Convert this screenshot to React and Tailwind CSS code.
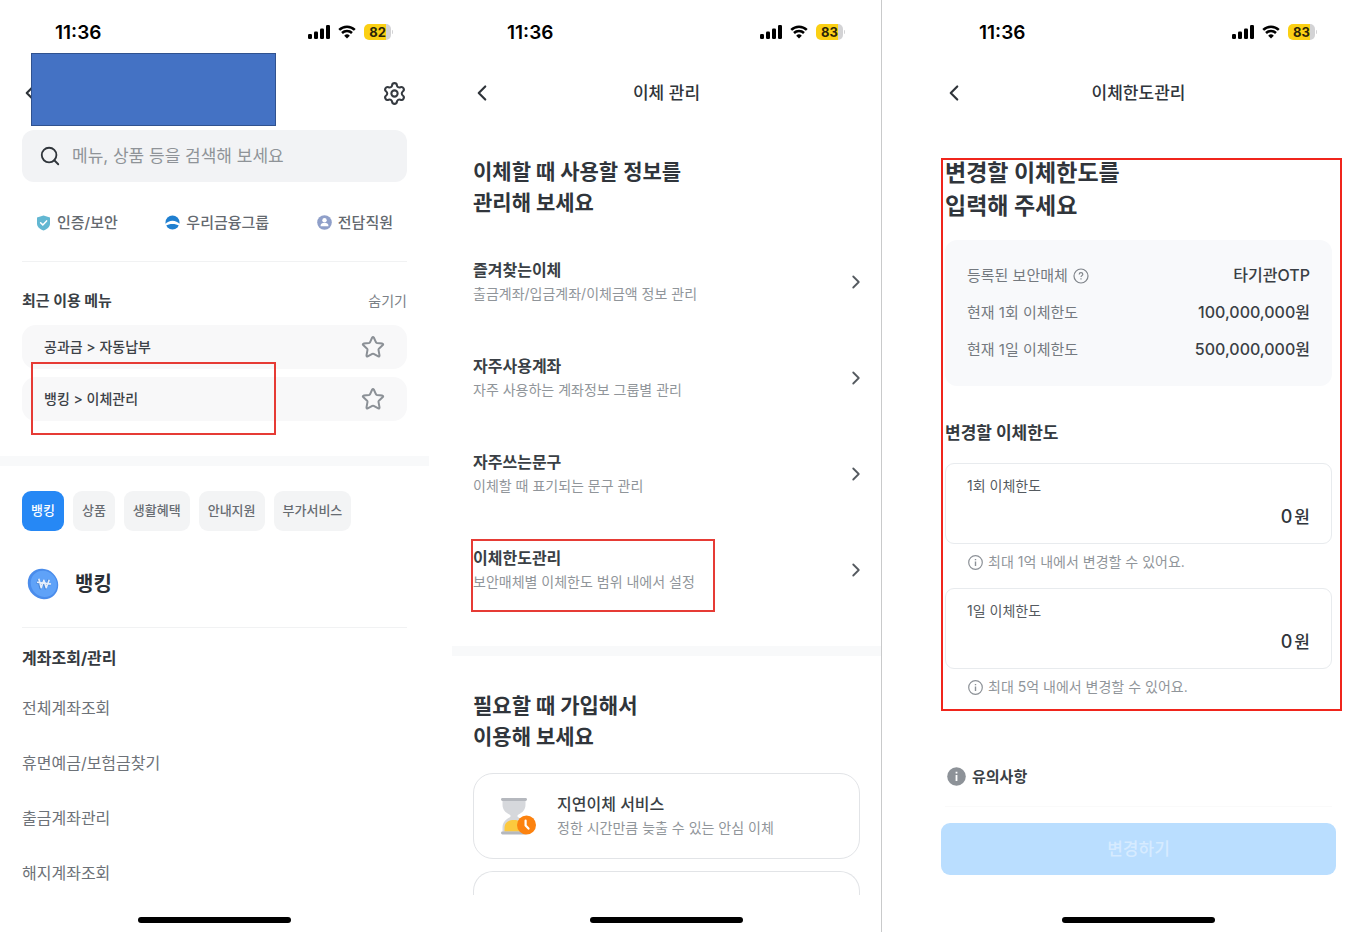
import { ChevronLeft, ChevronRight, Search, Settings } from "lucide-react";

function Signal() {
  return (
    <svg width="22" height="14" viewBox="0 0 22 14" fill="#000" aria-hidden="true">
      <rect x="0" y="9" width="4" height="5" rx="1.2" />
      <rect x="6" y="6.5" width="4" height="7.5" rx="1.2" />
      <rect x="12" y="3.5" width="4" height="10.5" rx="1.2" />
      <rect x="18" y="0" width="4" height="14" rx="1.2" />
    </svg>
  );
}

function Wifi() {
  return (
    <svg width="18" height="14" viewBox="0 0 18 14" fill="none" stroke="#000" aria-hidden="true">
      <path d="M1.2 4.9a11.2 11.2 0 0 1 15.6 0" strokeWidth="2.5" />
      <path d="M4 8a7.2 7.2 0 0 1 10 0" strokeWidth="2.5" />
      <path d="M9 13.6 6.2 10.7a4 4 0 0 1 5.6 0Z" fill="#000" stroke="none" />
    </svg>
  );
}

function StatusBar({ battery }) {
  return (
    <div className="flex h-16 shrink-0 items-center pr-9 pl-[55px]">
      <time className="pt-px text-[19px] leading-6 font-semibold text-black">11:36</time>
      <div className="ml-auto flex items-center">
        <Signal />
        <span className="ml-2 flex">
          <Wifi />
        </span>
        <span className="ml-2 flex h-4 w-[27px] items-center justify-center overflow-hidden rounded-[5px] bg-linear-to-r from-[#fbd014] from-82% to-[#d3d3d5] to-82% text-[13px] leading-4 font-bold text-[#2b2508]">
          {battery}
        </span>
        <span className="ml-px h-1 w-px rounded-r bg-[#d3d3d5]" />
      </div>
    </div>
  );
}

function HomeIndicator() {
  return (
    <div className="mt-auto flex h-[15px] shrink-0 items-start justify-center">
      <div className="h-[6px] w-[153px] rounded-full bg-black" />
    </div>
  );
}

function BackButton() {
  return (
    <button type="button" aria-label="뒤로" className="flex text-[#2f343a]">
      <ChevronLeft size={26} strokeWidth={2} />
    </button>
  );
}

function TitleBar({ title }) {
  return (
    <header className="grid h-[58px] shrink-0 grid-cols-[1fr_auto_1fr] items-center px-[17px]">
      <BackButton />
      <h1 className="text-[17px] leading-6 font-medium text-[#30353b]">{title}</h1>
    </header>
  );
}

function ShieldIcon() {
  return (
    <svg width="15" height="16" viewBox="0 0 15 16" aria-hidden="true">
      <path d="M7.5.6 14 2.6v5.8c0 3.2-2.600 5.500-6.500 7C3.600 13.900 1 11.600 1 8.400V2.600Z" fill="#62b7d2" />
      <path d="m4.600 7.800 2.200 2.100 3.800-4" fill="none" stroke="#fff" strokeWidth="1.500" strokeLinecap="round" />
    </svg>
  );
}

function GroupIcon() {
  return (
    <svg width="15" height="15" viewBox="0 0 15 15" aria-hidden="true">
      <circle cx="7.5" cy="7.5" r="7" fill="#1f7fd0" />
      <path d="M0 9.600C2 6.900 4.800 5.800 7.500 5.800s5.500 1.100 7.500 3.800l-.8 1.100c-1.900-1.100-4.200-1.600-6.700-1.600s-4.800.5-6.700 1.600Z" fill="#fff" />
    </svg>
  );
}

function StaffIcon() {
  return (
    <svg width="15" height="15" viewBox="0 0 15 15" aria-hidden="true">
      <circle cx="7.5" cy="7.5" r="7.3" fill="#8f9fc9" />
      <circle cx="7.500" cy="5.300" r="2.200" fill="#fff" />
      <path d="M3.600 11.300V10.400c0-1.500 1.200-2.400 2.600-2.400h2.600c1.400 0 2.600.9 2.600 2.400v.9Z" fill="#fff" />
    </svg>
  );
}

function StarIcon() {
  return (
    <svg width="24" height="24" viewBox="0 0 24 24" fill="none" stroke="#8b9096" strokeWidth="2" strokeLinejoin="round" aria-hidden="true">
      <path d="M11.200 2.500Q12 1.300 12.800 2.500L15 7.300Q15.300 7.900 16 8L21.400 8.600Q22.700 9 21.800 10L17.900 13.700Q17.400 14.200 17.500 14.900L18.500 20.400Q18.500 21.800 17.300 21.300L12.700 18.800Q12 18.500 11.300 18.800L6.700 21.300Q5.500 21.800 5.500 20.400L6.500 14.900Q6.600 14.200 6.100 13.700L2.200 10Q1.300 9 2.600 8.600L8 8Q8.700 7.900 9 7.300Z" />
    </svg>
  );
}

function CoinIcon() {
  return (
    <svg width="32" height="32" viewBox="0 0 32 32" aria-hidden="true">
      <ellipse cx="16" cy="16" rx="15.800" ry="14.600" transform="rotate(45 16 16)" fill="#4a8ceb" />
      <ellipse cx="16.800" cy="15.800" rx="13.600" ry="12.600" transform="rotate(45 16.800 15.800)" fill="#5fa2f8" />
      <path d="m11 11.500 2.400 9 2.600-7.500 2.400 7.500 3-9M9.500 14.800l14 1.800" fill="none" stroke="#4a86d6" strokeWidth="2" strokeLinejoin="round" />
      <path d="m11.800 10.800 2.400 9 2.600-7.500 2.400 7.500 3-8M10 14.200l14 1.800" fill="none" stroke="#e6eefb" strokeWidth="1.600" strokeLinejoin="round" />
    </svg>
  );
}

function HourglassIcon() {
  return (
    <svg width="37" height="38" viewBox="0 0 37 38" aria-hidden="true">
      <path d="M2.500 2.500h23v5c0 5.500-3 8-7 10-1.500.8-1.500 2.200 0 3 4 2 7 5 7 10.500v4h-23v-4c0-5.500 3-8.500 7-10.500 1.500-.8 1.500-2.200 0-3-4-2-7-4.500-7-10Z" fill="#d6d8dc" />
      <path d="M4.500 34.500V31c0-5.500 4.500-8 9.500-8s9.500 2.500 9.500 8v3.500Z" fill="#fcc93e" />
      <rect x="1" y="1" width="26" height="3" rx="1.400" fill="#b5b8be" />
      <rect x="1" y="34.500" width="26" height="3" rx="1.400" fill="#b5b8be" />
      <circle cx="26.500" cy="28" r="9.500" fill="#fc820f" />
      <path d="M25.600 23.600v5l2.900 3" fill="none" stroke="#fff" strokeWidth="2.200" strokeLinecap="round" strokeLinejoin="round" />
    </svg>
  );
}

function InfoOutline() {
  return (
    <svg width="15" height="15" viewBox="0 0 15 15" fill="none" stroke="#8c9197" aria-hidden="true">
      <circle cx="7.5" cy="7.5" r="6.800" strokeWidth="1.200" />
      <path d="M7.500 6.500v4.500M7.500 3.900v1.400" strokeWidth="1.400" />
    </svg>
  );
}

function InfoSolid() {
  return (
    <svg width="19" height="19" viewBox="0 0 19 19" aria-hidden="true">
      <circle cx="9.5" cy="9.5" r="9.3" fill="#8d9298" />
      <path d="M9.500 8v6M9.500 4.800v1.800" stroke="#fff" strokeWidth="1.800" />
    </svg>
  );
}

function QuestionIcon() {
  return (
    <svg width="16" height="16" viewBox="0 0 16 16" fill="none" stroke="#7f848a" aria-hidden="true">
      <circle cx="8" cy="8" r="7" strokeWidth="1.200" />
      <path d="M6.200 6.500c0-1.100.8-1.800 1.800-1.800s1.800.7 1.800 1.600c0 1.300-1.800 1.400-1.800 2.700M8 10.200v1.300" strokeWidth="1.200" />
    </svg>
  );
}

const quickLinks = [
  { label: "인증/보안", Icon: ShieldIcon },
  { label: "우리금융그룹", Icon: GroupIcon },
  { label: "전담직원", Icon: StaffIcon },
];
const tabs = ["뱅킹", "상품", "생활혜택", "안내지원", "부가서비스"];
const accountMenu = ["전체계좌조회", "휴면예금/보험금찾기", "출금계좌관리", "해지계좌조회"];

function RecentItem({ label, marked }) {
  return (
    <li className="relative flex h-11 items-center justify-between rounded-[14px] bg-[#f8f8f9] px-[22px]">
      <a href="#recent" className="text-[14px] leading-5 font-medium text-[#3c4147]">
        {label}
      </a>
      <button type="button" aria-label="즐겨찾기" className="flex">
        <StarIcon />
      </button>
      {marked && <span className="absolute -top-[15px] left-[9px] h-[73px] w-[245px] border-2 border-[#e63b35]" />}
    </li>
  );
}

function MenuScreen() {
  return (
    <section className="flex min-w-0 flex-1 flex-col">
      <StatusBar battery="82" />
      <header className="relative flex h-[58px] items-center justify-between pr-[22px] pl-[17px]">
        <BackButton />
        <button type="button" aria-label="설정" className="flex text-[#353a40]">
          <Settings size={25} strokeWidth={2} />
        </button>
        <div className="absolute -top-[11px] left-[31px] h-[73px] w-[245px] border border-[#30528f] bg-[#4472c4]" />
      </header>

      <div className="flex flex-col px-[22px] pt-2">
        <label className="flex h-[52px] items-center gap-[11px] rounded-xl bg-[#f2f3f5] px-[17px]">
          <Search size={22} strokeWidth={2} className="shrink-0 text-[#30353b]" />
          <input
            type="search"
            aria-label="메뉴 검색"
            placeholder="메뉴, 상품 등을 검색해 보세요"
            className="min-w-0 flex-1 bg-transparent text-[17px] leading-6 outline-none placeholder:text-[#8f9398]"
          />
        </label>

        <nav className="flex h-20 items-center justify-between border-b border-[#f1f2f3] px-[14px] pt-[2px]">
          {quickLinks.map(({ label, Icon }) => (
            <a key={label} href="#quick" className="flex items-center gap-[6px] text-[15px] leading-5 font-medium text-[#64696f]">
              <Icon />
              {label}
            </a>
          ))}
        </nav>

        <div className="flex h-[63px] items-center justify-between pt-[14px]">
          <h2 className="text-[15px] leading-5 font-bold text-[#3a3f45]">최근 이용 메뉴</h2>
          <button type="button" className="text-[14px] leading-5 text-[#7b8086]">
            숨기기
          </button>
        </div>
        <ul className="flex flex-col gap-2">
          <RecentItem label="공과금 > 자동납부" />
          <RecentItem label="뱅킹 > 이체관리" marked />
        </ul>
      </div>

      <div className="mt-[35px] h-[10px] shrink-0 bg-[#f8f9fa]" />

      <div className="flex flex-col px-[22px] pt-[25px]">
        <nav className="flex gap-[9px]">
          {tabs.map((tab, i) => (
            <button
              key={tab}
              type="button"
              className={
                i === 0
                  ? "h-10 rounded-[9px] bg-[#2688f5] px-[9px] pb-[2px] text-[13px] leading-5 font-medium text-white"
                  : "h-10 rounded-[9px] bg-[#f3f4f5] px-[9px] pb-[2px] text-[13px] leading-5 font-medium text-[#676c72]"
              }
            >
              {tab}
            </button>
          ))}
        </nav>
        <div className="flex h-[97px] items-center gap-4 border-b border-[#f1f2f3] pt-[9px] pl-[5px]">
          <CoinIcon />
          <h2 className="text-[20px] leading-7 font-bold text-[#2b3036]">뱅킹</h2>
        </div>
        <h3 className="pt-[18px] text-[16px] leading-6 font-bold text-[#353a40]">계좌조회/관리</h3>
        <ul className="pt-[10px]">
          {accountMenu.map((item) => (
            <li key={item} className="flex h-[55px] items-center">
              <a href="#account" className="text-[16px] leading-6 text-[#6d7278]">
                {item}
              </a>
            </li>
          ))}
        </ul>
      </div>
      <HomeIndicator />
    </section>
  );
}

const manageItems = [
  { title: "즐겨찾는이체", text: "출금계좌/입금계좌/이체금액 정보 관리" },
  { title: "자주사용계좌", text: "자주 사용하는 계좌정보 그룹별 관리" },
  { title: "자주쓰는문구", text: "이체할 때 표기되는 문구 관리" },
  { title: "이체한도관리", text: "보안매체별 이체한도 범위 내에서 설정", marked: true },
];

function ManageScreen() {
  return (
    <section className="ml-[23px] flex min-w-0 flex-1 flex-col">
      <StatusBar battery="83" />
      <TitleBar title="이체 관리" />
      <div className="px-[21px] pt-[34px]">
        <h2 className="text-[21px] leading-[31px] font-bold text-[#30353b]">
          이체할 때 사용할 정보를
          <br />
          관리해 보세요
        </h2>
        <ul className="pt-4">
          {manageItems.map((item) => (
            <li key={item.title} className="relative">
              <a href="#manage" className="flex h-24 items-center justify-between">
                <span className="flex flex-col">
                  <span className="text-[16px] leading-6 font-bold text-[#3a3f45]">{item.title}</span>
                  <span className="text-[14px] leading-6 text-[#90959a]">{item.text}</span>
                </span>
                <ChevronRight size={22} strokeWidth={2} className="-mr-[7px] text-[#555a60]" />
              </a>
              {item.marked && <span className="absolute top-[17px] -left-[2px] h-[73px] w-[244px] border-2 border-[#e63b35]" />}
            </li>
          ))}
        </ul>
      </div>

      <div className="mt-7 h-[10px] shrink-0 bg-[#f8f9fa]" />

      <div className="px-[21px] pt-[34px]">
        <h2 className="text-[21px] leading-[31px] font-bold text-[#30353b]">
          필요할 때 가입해서
          <br />
          이용해 보세요
        </h2>
        <a href="#delay" className="mt-[21px] flex h-[86px] items-center gap-5 rounded-[20px] border border-[#e2e4e7] px-[26px]">
          <HourglassIcon />
          <span className="flex flex-col">
            <span className="text-[16px] leading-6 font-medium text-[#3a3f45]">지연이체 서비스</span>
            <span className="text-[14px] leading-6 text-[#90959a]">정한 시간만큼 늦출 수 있는 안심 이체</span>
          </span>
        </a>
        <div className="mt-3 h-6 rounded-t-[20px] border border-b-0 border-[#e2e4e7]" />
      </div>
      <HomeIndicator />
    </section>
  );
}

function LimitField({ id, label, hint }) {
  return (
    <div>
      <div className="flex h-[81px] flex-col justify-between rounded-[9px] border border-[#e8ebee] px-[21px] pt-[12px] pb-[14px]">
        <label htmlFor={id} className="text-[14px] leading-5 text-[#555a60]">
          {label}
        </label>
        <div className="flex items-center gap-[2px] text-[17px] leading-6 font-medium text-[#30353b]">
          <input id={id} type="text" inputMode="numeric" defaultValue="0" className="min-w-0 flex-1 bg-transparent text-right text-[18px] outline-none" />
          <span>원</span>
        </div>
      </div>
      <p className="flex h-11 items-center gap-[5px] pb-2 pl-[23px] text-[14px] leading-5 text-[#90959a]">
        <InfoOutline />
        {hint}
      </p>
    </div>
  );
}

function LimitScreen() {
  return (
    <section className="ml-[42px] flex min-w-0 flex-1 flex-col">
      <StatusBar battery="83" />
      <TitleBar title="이체한도관리" />
      <div className="relative px-[21px] pt-[35px]">
        <h2 className="text-[23px] leading-[33px] font-bold text-[#30353b]">
          변경할 이체한도를
          <br />
          입력해 주세요
        </h2>
        <dl className="mt-[17px] rounded-xl bg-[#f8f9fb] px-[22px] pt-[17px] pb-[18px] text-[15px] leading-[37px]">
          <div className="flex items-center justify-between">
            <dt className="flex items-center gap-[5px] text-[#74797f]">
              등록된 보안매체
              <QuestionIcon />
            </dt>
            <dd className="text-[16px] font-medium text-[#3a3f45]">타기관OTP</dd>
          </div>
          <div className="flex items-center justify-between">
            <dt className="text-[#74797f]">현재 1회 이체한도</dt>
            <dd className="text-[16px] font-medium text-[#3a3f45]">100,000,000원</dd>
          </div>
          <div className="flex items-center justify-between">
            <dt className="text-[#74797f]">현재 1일 이체한도</dt>
            <dd className="text-[16px] font-medium text-[#3a3f45]">500,000,000원</dd>
          </div>
        </dl>
        <h3 className="mt-[35px] mb-[18px] text-[17px] leading-6 font-bold text-[#353a40]">변경할 이체한도</h3>
        <LimitField id="once" label="1회 이체한도" hint="최대 1억 내에서 변경할 수 있어요." />
        <LimitField id="daily" label="1일 이체한도" hint="최대 5억 내에서 변경할 수 있어요." />
        <span className="pointer-events-none absolute top-9 right-[11px] bottom-[2px] left-[17px] border-2 border-[#f0251c]" />
      </div>
      <div className="mx-[21px] mt-[54px] flex h-10 items-start gap-[6px] border-b border-[#fafafa] pl-[2px]">
        <InfoSolid />
        <h3 className="text-[15px] leading-5 font-bold text-[#3a3f45]">유의사항</h3>
      </div>
      <button type="button" className="mx-[17px] mt-4 mb-[40px] h-[52px] shrink-0 rounded-[9px] bg-[#badeff] text-[17px] leading-6 font-medium text-[#d6ebff]">
        변경하기
      </button>
      <HomeIndicator />
    </section>
  );
}

export default function App() {
  return (
    <main className="flex min-h-screen bg-white pr-px font-[Inter,'Noto_Sans_CJK_KR',sans-serif]">
      <MenuScreen />
      <ManageScreen />
      <div className="w-px shrink-0 bg-[#c9cacb]" />
      <LimitScreen />
    </main>
  );
}
